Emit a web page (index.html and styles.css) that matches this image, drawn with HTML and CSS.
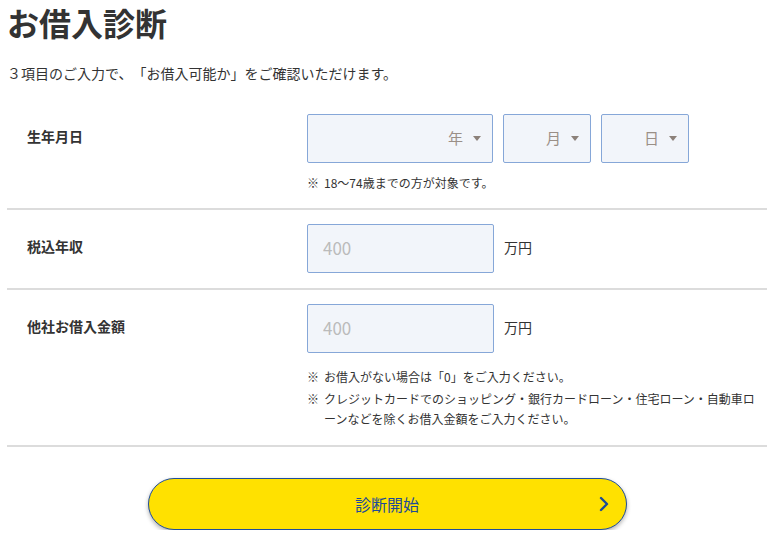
FILE: index.html
```html
<!DOCTYPE html>
<html lang="ja">
<head>
    <meta charset="UTF-8">
    <meta name="viewport" content="width=device-width, initial-scale=1.0">
    <title>お借入診断</title>
    <link rel="stylesheet" href="styles.css">
</head>
<body>
    <div class="page">
        <h1>お借入診断</h1>
        <p class="lead">３項目のご入力で、「お借入可能か」をご確認いただけます。</p>

        <form class="form">
            <div class="row">
                <div class="label">生年月日</div>
                <div class="field">
                    <div class="selects">
                        <div class="select select-year">
                            <select>
                                <option>年</option>
                            </select>
                            <span class="arrow"></span>
                        </div>
                        <div class="select select-small">
                            <select>
                                <option>月</option>
                            </select>
                            <span class="arrow"></span>
                        </div>
                        <div class="select select-small">
                            <select>
                                <option>日</option>
                            </select>
                            <span class="arrow"></span>
                        </div>
                    </div>
                    <ul class="notes notes-birth">
                        <li><span class="mark">※</span><span>18〜74歳までの方が対象です。</span></li>
                    </ul>
                </div>
            </div>

            <div class="row">
                <div class="label">税込年収</div>
                <div class="field">
                    <div class="amount">
                        <input type="text" placeholder="400">
                        <span class="unit">万円</span>
                    </div>
                </div>
            </div>

            <div class="row">
                <div class="label">他社お借入金額</div>
                <div class="field">
                    <div class="amount">
                        <input type="text" placeholder="400">
                        <span class="unit">万円</span>
                    </div>
                    <ul class="notes notes-loan">
                        <li><span class="mark">※</span><span>お借入がない場合は「0」をご入力ください。</span></li>
                        <li><span class="mark">※</span><span>クレジットカードでのショッピング・銀行カードローン・住宅ローン・自動車ローンなどを除くお借入金額をご入力ください。</span></li>
                    </ul>
                </div>
            </div>

            <div class="submit">
                <button type="button" class="btn">
                    診断開始
                    <svg class="chevron" width="10" height="16" viewBox="0 0 10 16">
                        <path d="M2 2 L8 8 L2 14" fill="none" stroke="#1d4b98" stroke-width="2.4" stroke-linecap="round" stroke-linejoin="round"/>
                    </svg>
                </button>
            </div>
        </form>
    </div>
</body>
</html>
```

FILE: styles.css
```css
body {
    margin: 0;
    font-family: "Noto Sans CJK JP", "Noto Sans", sans-serif;
    color: #333;
    background-color: #fff;
    text-spacing-trim: space-all;
}

.page {
    padding: 0 7px;
}

h1 {
    margin: 0;
    font-size: 32px;
    line-height: 45px;
    font-weight: bold;
    color: #333;
}

.lead {
    margin: 18px 0 0;
    font-size: 14px;
    line-height: 20px;
}

.form {
    margin-top: 17px;
}

.row {
    display: flex;
    padding: 14px 0 15px;
    border-bottom: 2px solid #dcdcdc;
}

.label {
    width: 280px;
    padding-left: 20px;
    font-size: 14px;
    font-weight: bold;
    line-height: 45px;
}

.field {
    flex: 1;
}

.selects {
    display: flex;
    gap: 10px;
}

.select {
    position: relative;
}

.select select {
    appearance: none;
    -webkit-appearance: none;
    display: block;
    width: 100%;
    height: 49px;
    padding: 0 29px 2px 10px;
    border: 1px solid #86a7d8;
    border-radius: 2px;
    background-color: #f2f5fa;
    font-family: inherit;
    font-size: 15px;
    color: #9a8f87;
    text-align: right;
    text-align-last: right;
}

.select-year {
    width: 186px;
}

.select-small {
    width: 88px;
}

.arrow {
    position: absolute;
    right: 12px;
    top: 22px;
    width: 0;
    height: 0;
    border-left: 4px solid transparent;
    border-right: 4px solid transparent;
    border-top: 5px solid #8c817a;
    pointer-events: none;
}

.amount {
    display: flex;
    align-items: center;
}

.amount input {
    box-sizing: border-box;
    width: 187px;
    height: 49px;
    padding: 0 15px 3px;
    border: 1px solid #86a7d8;
    border-radius: 2px;
    background-color: #f2f5fa;
    font-family: inherit;
    font-size: 17px;
    color: #333;
}

.amount input::placeholder {
    color: #bbb;
}

.unit {
    margin-left: 10px;
    padding-bottom: 4px;
    font-size: 14px;
}

.notes {
    list-style: none;
    margin: 0;
    padding: 0;
    max-width: 454px;
    font-size: 12px;
    line-height: 20px;
}

.notes li {
    display: flex;
    line-break: loose;
}

.notes li + li {
    margin-top: 2px;
}

.notes .mark {
    flex: 0 0 17px;
}

.notes-birth {
    margin-top: 10px;
}

.notes-loan {
    margin-top: 14px;
    margin-bottom: 1px;
}

.submit {
    display: flex;
    justify-content: center;
    padding-top: 31px;
}

.btn {
    position: relative;
    width: 479px;
    height: 52px;
    padding-bottom: 2px;
    border: 1px solid #1f4e9c;
    border-radius: 26px;
    background-color: #ffe100;
    box-shadow: 0 2px 4px rgba(0, 0, 0, 0.3);
    font-family: inherit;
    font-size: 16px;
    color: #1d4b98;
    cursor: pointer;
}

.chevron {
    position: absolute;
    right: 17px;
    top: 17px;
}
```
